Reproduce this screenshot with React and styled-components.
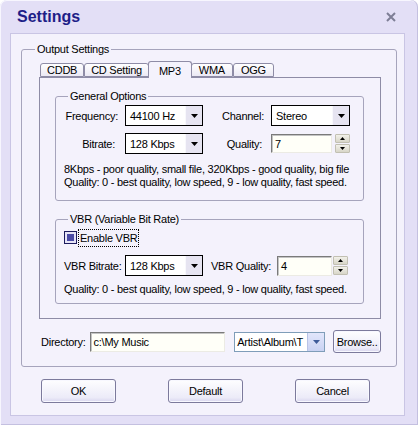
import React from 'react';
import styled, { createGlobalStyle } from 'styled-components';

const GlobalStyle = createGlobalStyle`
  * { box-sizing: border-box; }
  html, body { margin: 0; padding: 0; background: #fff; }
  body {
    font-family: "Liberation Sans", Arial, sans-serif;
    font-size: 11px;
    letter-spacing: -0.25px;
    color: #000;
  }
`;

const Window = styled.div`
  width: 418px;
  height: 425px;
  display: flex;
  flex-direction: column;
  padding: 0 13px 9px 10px;
  background: #e3dff6;
  border-radius: 7px 7px 0 0;
  box-shadow: inset 1px 0 #f7f6fe, inset -1px 0 #c4c0e0, inset 0 -1px #c4c0e0, inset 0 1px #f7f6fe;
  overflow: hidden;
`;

const TitleBar = styled.div`
  height: 33px;
  flex: none;
  display: flex;
  align-items: center;
  justify-content: space-between;
  padding: 1px 9px 0 7px;
`;

const Title = styled.div`
  font-size: 16px;
  font-weight: bold;
  letter-spacing: 0;
  color: #1e1e88;
`;

const Client = styled.div`
  flex: 1;
  display: flex;
  flex-direction: column;
  padding: 0 7px 0 10px;
  background: #f4f2fc;
  border: 1px solid #c9c5e4;
`;

const Group = styled.div`
  margin-top: ${p => p.$mt || 0}px;
  padding: ${p => p.$pad};
  border: 1px solid #a6a4bc;
  border-radius: 3px;
  background: #f4f2fc;
`;

const Caption = styled.div`
  width: fit-content;
  margin: -8px 0 0 ${p => p.$indent}px;
  padding: 0 2px;
  line-height: 14px;
  background: #f4f2fc;
`;

const TabRow = styled.div`
  display: flex;
  align-items: flex-end;
  margin-top: 5px;
  padding-left: 1px;
`;

const Tab = styled.div`
  height: ${p => (p.$active ? 17 : 14)}px;
  padding: ${p => (p.$active ? '2px 10px 0' : `0 ${p.$pad}px`)};
  margin: ${p => (p.$active ? '0 -1px -1px' : '0')};
  position: ${p => (p.$active ? 'relative' : 'static')};
  z-index: ${p => (p.$active ? 1 : 'auto')};
  display: flex;
  align-items: center;
  border: 1px solid #8e8ca6;
  border-bottom: ${p => (p.$active ? 'none' : '1px solid #8e8ca6')};
  border-radius: 3px 3px 0 0;
  background: ${p => (p.$active ? '#f4f2fc' : 'linear-gradient(#ffffff, #ebe9f4)')};
  white-space: nowrap;
`;

const TabPanel = styled.div`
  padding: 18px 16px 14px 15px;
  border: 1px solid #8e8ca6;
  background: #f4f2fc;
`;

const FormGrid = styled.div`
  display: grid;
  grid-template-columns: ${p => p.$cols};
  grid-auto-rows: 21px;
  row-gap: 7px;
  align-items: center;
  margin-top: ${p => p.$mt}px;
`;

const Label = styled.div`
  text-align: ${p => p.$align || 'right'};
  padding-right: ${p => p.$pr || 0}px;
  white-space: nowrap;
`;

const ComboBox = styled.div`
  display: flex;
  width: ${p => p.$w}px;
  height: ${p => p.$h || 21}px;
  border: 1px solid ${p => (p.$xp ? '#7f9db9' : '#000')};
  background: #fff;
`;

const ComboText = styled.div`
  flex: 1;
  min-width: 0;
  padding-left: ${p => p.$pl || 4}px;
  display: flex;
  align-items: center;
  overflow: hidden;
  white-space: nowrap;
`;

const DropButton = styled.div`
  width: 17px;
  flex: none;
  display: flex;
  align-items: center;
  justify-content: center;
  background: ${p => (p.$xp ? 'linear-gradient(#e2e6fb, #c9d2f2)' : '#e6e4f1')};
  border-left: 1px solid ${p => (p.$xp ? '#b9c3e6' : '#f8f8fc')};
`;

const SpinWrap = styled.div`
  display: flex;
  align-items: center;
  gap: ${p => p.$gap}px;
`;

const Edit = styled.div`
  width: ${p => p.$w}px;
  height: ${p => p.$h}px;
  padding-left: 3px;
  display: flex;
  align-items: center;
  background: #fffff8;
  border: 1px solid;
  border-color: #7a7a7a #ecebe4 #ecebe4 #7a7a7a;
  box-shadow: inset 1px 1px 0 #c4c4c4;
  white-space: nowrap;
  overflow: hidden;
`;

const SpinButtons = styled.div`
  display: flex;
  flex-direction: column;
  gap: 1px;
`;

const SpinButton = styled.div`
  width: 15px;
  height: 9px;
  display: flex;
  align-items: center;
  justify-content: center;
  border: 1px solid #c2c0b2;
  border-radius: 1px;
  background: linear-gradient(#f2f1ea, #d8d6c8);
`;

const Info = styled.div`
  margin-top: ${p => p.$mt}px;
  line-height: 13px;
  white-space: nowrap;
`;

const CheckRow = styled.div`
  height: 17px;
  margin-top: 3px;
  display: flex;
  align-items: center;
`;

const CheckBox = styled.span`
  width: 13px;
  height: 13px;
  flex: none;
  border: 1px solid #1c1c5e;
  background: #4a4aa6;
  box-shadow: inset 0 0 0 2px #e6e4f6;
`;

const FocusLabel = styled.span`
  margin-left: 1px;
  padding: 1px 1px;
  line-height: 14px;
  border: 1px dotted #000;
`;

const DirRow = styled.div`
  height: 23px;
  margin-top: 11px;
  padding-left: 2px;
  display: flex;
  align-items: center;
`;

const DirLabel = styled.span`
  margin-right: 4px;
`;

const Spacer = styled.div`
  width: ${p => p.$w}px;
  flex: none;
`;

const PushButton = styled.button`
  width: ${p => p.$w}px;
  height: ${p => p.$h}px;
  margin-left: ${p => p.$ml || 0}px;
  padding: 0;
  font-family: "Liberation Sans", Arial, sans-serif;
  font-size: 11px;
  letter-spacing: -0.25px;
  color: #000;
  border: 1px solid #7c7a9c;
  border-radius: 3px;
  background: linear-gradient(#fefeff, #ecebf8 80%, #d8d5ee);
  box-shadow: inset 0 0 0 1px #f8f8ff;
`;

const ButtonRow = styled.div`
  display: flex;
  justify-content: space-between;
  margin-top: 12px;
  padding: 0 27px 0 20px;
`;

const Arrow = ({ color = '#000', w = 7, h = 4, up }) => (
  <svg width={w} height={h} viewBox={`0 0 ${w} ${h}`}>
    <polygon points={up ? `0,${h} ${w},${h} ${w / 2},0` : `0,0 ${w},0 ${w / 2},${h}`} fill={color} />
  </svg>
);

const Combo = ({ value, w, h, xp }) => (
  <ComboBox $w={w} $h={h} $xp={xp}>
    <ComboText $pl={xp ? 2 : 4}>{value}</ComboText>
    <DropButton $xp={xp}>
      <Arrow color={xp ? '#3d5a99' : '#000'} />
    </DropButton>
  </ComboBox>
);

const Spin = ({ value, w, h, gap }) => (
  <SpinWrap $gap={gap}>
    <Edit $w={w} $h={h}>{value}</Edit>
    <SpinButtons>
      <SpinButton><Arrow w={5} h={3} up /></SpinButton>
      <SpinButton><Arrow w={5} h={3} /></SpinButton>
    </SpinButtons>
  </SpinWrap>
);

const tabs = [
  { name: 'CDDB', pad: 6 },
  { name: 'CD Setting', pad: 6 },
  { name: 'MP3', active: true },
  { name: 'WMA', pad: 7 },
  { name: 'OGG', pad: 7 },
];

const App = () => (
  <>
    <GlobalStyle />
    <Window>
      <TitleBar>
        <Title>Settings</Title>
        <svg width="10" height="10" viewBox="0 0 10 10">
          <path d="M1 1L9 9M9 1L1 9" stroke="#7e7e96" strokeWidth="2" />
        </svg>
      </TitleBar>

      <Client>
        <Group $mt={15} $pad="0 15px 13px 17px">
          <Caption $indent={-4}>Output Settings</Caption>

          <TabRow>
            {tabs.map(t => (
              <Tab key={t.name} $active={t.active} $pad={t.pad}>
                {t.name}
              </Tab>
            ))}
          </TabRow>

          <TabPanel>
            <Group $pad="0 0 11px 8px">
              <Caption $indent={4}>General Options</Caption>
              <FormGrid $cols="61px 78px 68px auto" $mt={2}>
                <Label $pr={7}>Frequency:</Label>
                <Combo value="44100 Hz" w={78} />
                <Label $pr={7}>Channel:</Label>
                <Combo value="Stereo" w={79} />
                <Label $pr={10}>Bitrate:</Label>
                <Combo value="128 Kbps" w={78} />
                <Label $pr={9}>Quality:</Label>
                <Spin value="7" w={61} h={19} gap={3} />
              </FormGrid>
              <Info $mt={9}>
                8Kbps - poor quality, small file, 320Kbps - good quality, big file
                <br />
                Quality: 0 - best quality, low speed, 9 - low quality, fast speed.
              </Info>
            </Group>

            <Group $mt={18} $pad="0 0 7px 8px">
              <Caption $indent={4}>VBR (Variable Bit Rate)</Caption>
              <CheckRow>
                <CheckBox />
                <FocusLabel>Enable VBR</FocusLabel>
              </CheckRow>
              <FormGrid $cols="61px 78px 74px auto" $mt={9}>
                <Label $align="left">VBR Bitrate:</Label>
                <Combo value="128 Kbps" w={78} />
                <Label $pr={6}>VBR Quality:</Label>
                <Spin value="4" w={55} h={20} gap={1} />
              </FormGrid>
              <Info $mt={7}>
                Quality: 0 - best quality, low speed, 9 - low quality, fast speed.
              </Info>
            </Group>
          </TabPanel>

          <DirRow>
            <DirLabel>Directory:</DirLabel>
            <Edit $w={136} $h={20}>c:\My Music</Edit>
            <Spacer $w={9} />
            <Combo value="Artist\Album\T" w={91} h={20} xp />
            <PushButton $w={48} $h={23} $ml={8}>Browse..</PushButton>
          </DirRow>
        </Group>

        <ButtonRow>
          <PushButton $w={75} $h={24}>OK</PushButton>
          <PushButton $w={75} $h={24}>Default</PushButton>
          <PushButton $w={75} $h={24}>Cancel</PushButton>
        </ButtonRow>
      </Client>
    </Window>
  </>
);

export default App;
